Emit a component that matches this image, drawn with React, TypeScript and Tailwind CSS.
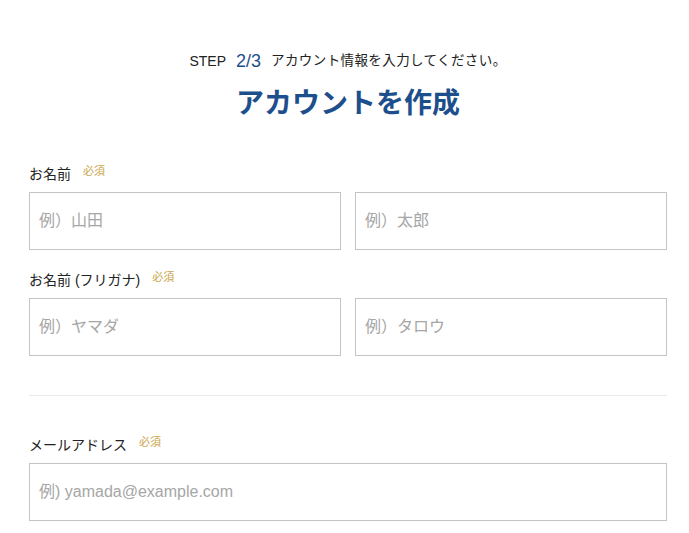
const font = { fontFamily: '"Liberation Sans", "Noto Sans CJK JP", sans-serif' };

function Required() {
  return <span className="ml-[12px] -translate-y-[3px] text-[11px] leading-none text-[#c9a54a]">必須</span>;
}

function Label({ children }: { children: React.ReactNode }) {
  return (
    <div className="flex items-center h-[20px] mb-[8px]">
      <span className="text-[14px] leading-[20px] text-[#222]">{children}</span>
      <Required />
    </div>
  );
}

function Field({ placeholder }: { placeholder: string }) {
  return (
    <input
      placeholder={placeholder}
      className="h-[58px] w-full border border-[#c4c4c4] bg-white px-[9px] text-[16px] text-[#333] placeholder:text-[#a6a6a6] outline-none"
      style={font}
    />
  );
}

export default function App() {
  return (
    <div className="min-h-screen w-full bg-white pl-[29px] pr-[22px] pt-[51px]" style={font}>
      <div className="flex items-center justify-center h-[20px] text-[14px] text-[#222]">
        <span>STEP</span>
        <span className="ml-[10px] text-[18px] text-[#1d4f8c]">2/3</span>
        <span className="ml-[10px] text-[13.5px] tracking-[0.4px]">アカウント情報を入力してください。</span>
      </div>
      <h1 className="mt-[13px] h-[40px] text-center text-[28px] leading-[40px] font-bold text-[#1d4f8c]">
        アカウントを作成
      </h1>

      <div className="mt-[40px]">
        <Label>お名前</Label>
        <div className="grid grid-cols-2 gap-[14px]">
          <Field placeholder="例）山田" />
          <Field placeholder="例）太郎" />
        </div>
      </div>

      <div className="mt-[20px]">
        <Label>お名前 (フリガナ)</Label>
        <div className="grid grid-cols-2 gap-[14px]">
          <Field placeholder="例）ヤマダ" />
          <Field placeholder="例）タロウ" />
        </div>
      </div>

      <hr className="mt-[39px] border-0 border-t border-[#ebebeb]" />

      <div className="mt-[39px]">
        <Label>メールアドレス</Label>
        <Field placeholder="例) yamada@example.com" />
      </div>
    </div>
  );
}
